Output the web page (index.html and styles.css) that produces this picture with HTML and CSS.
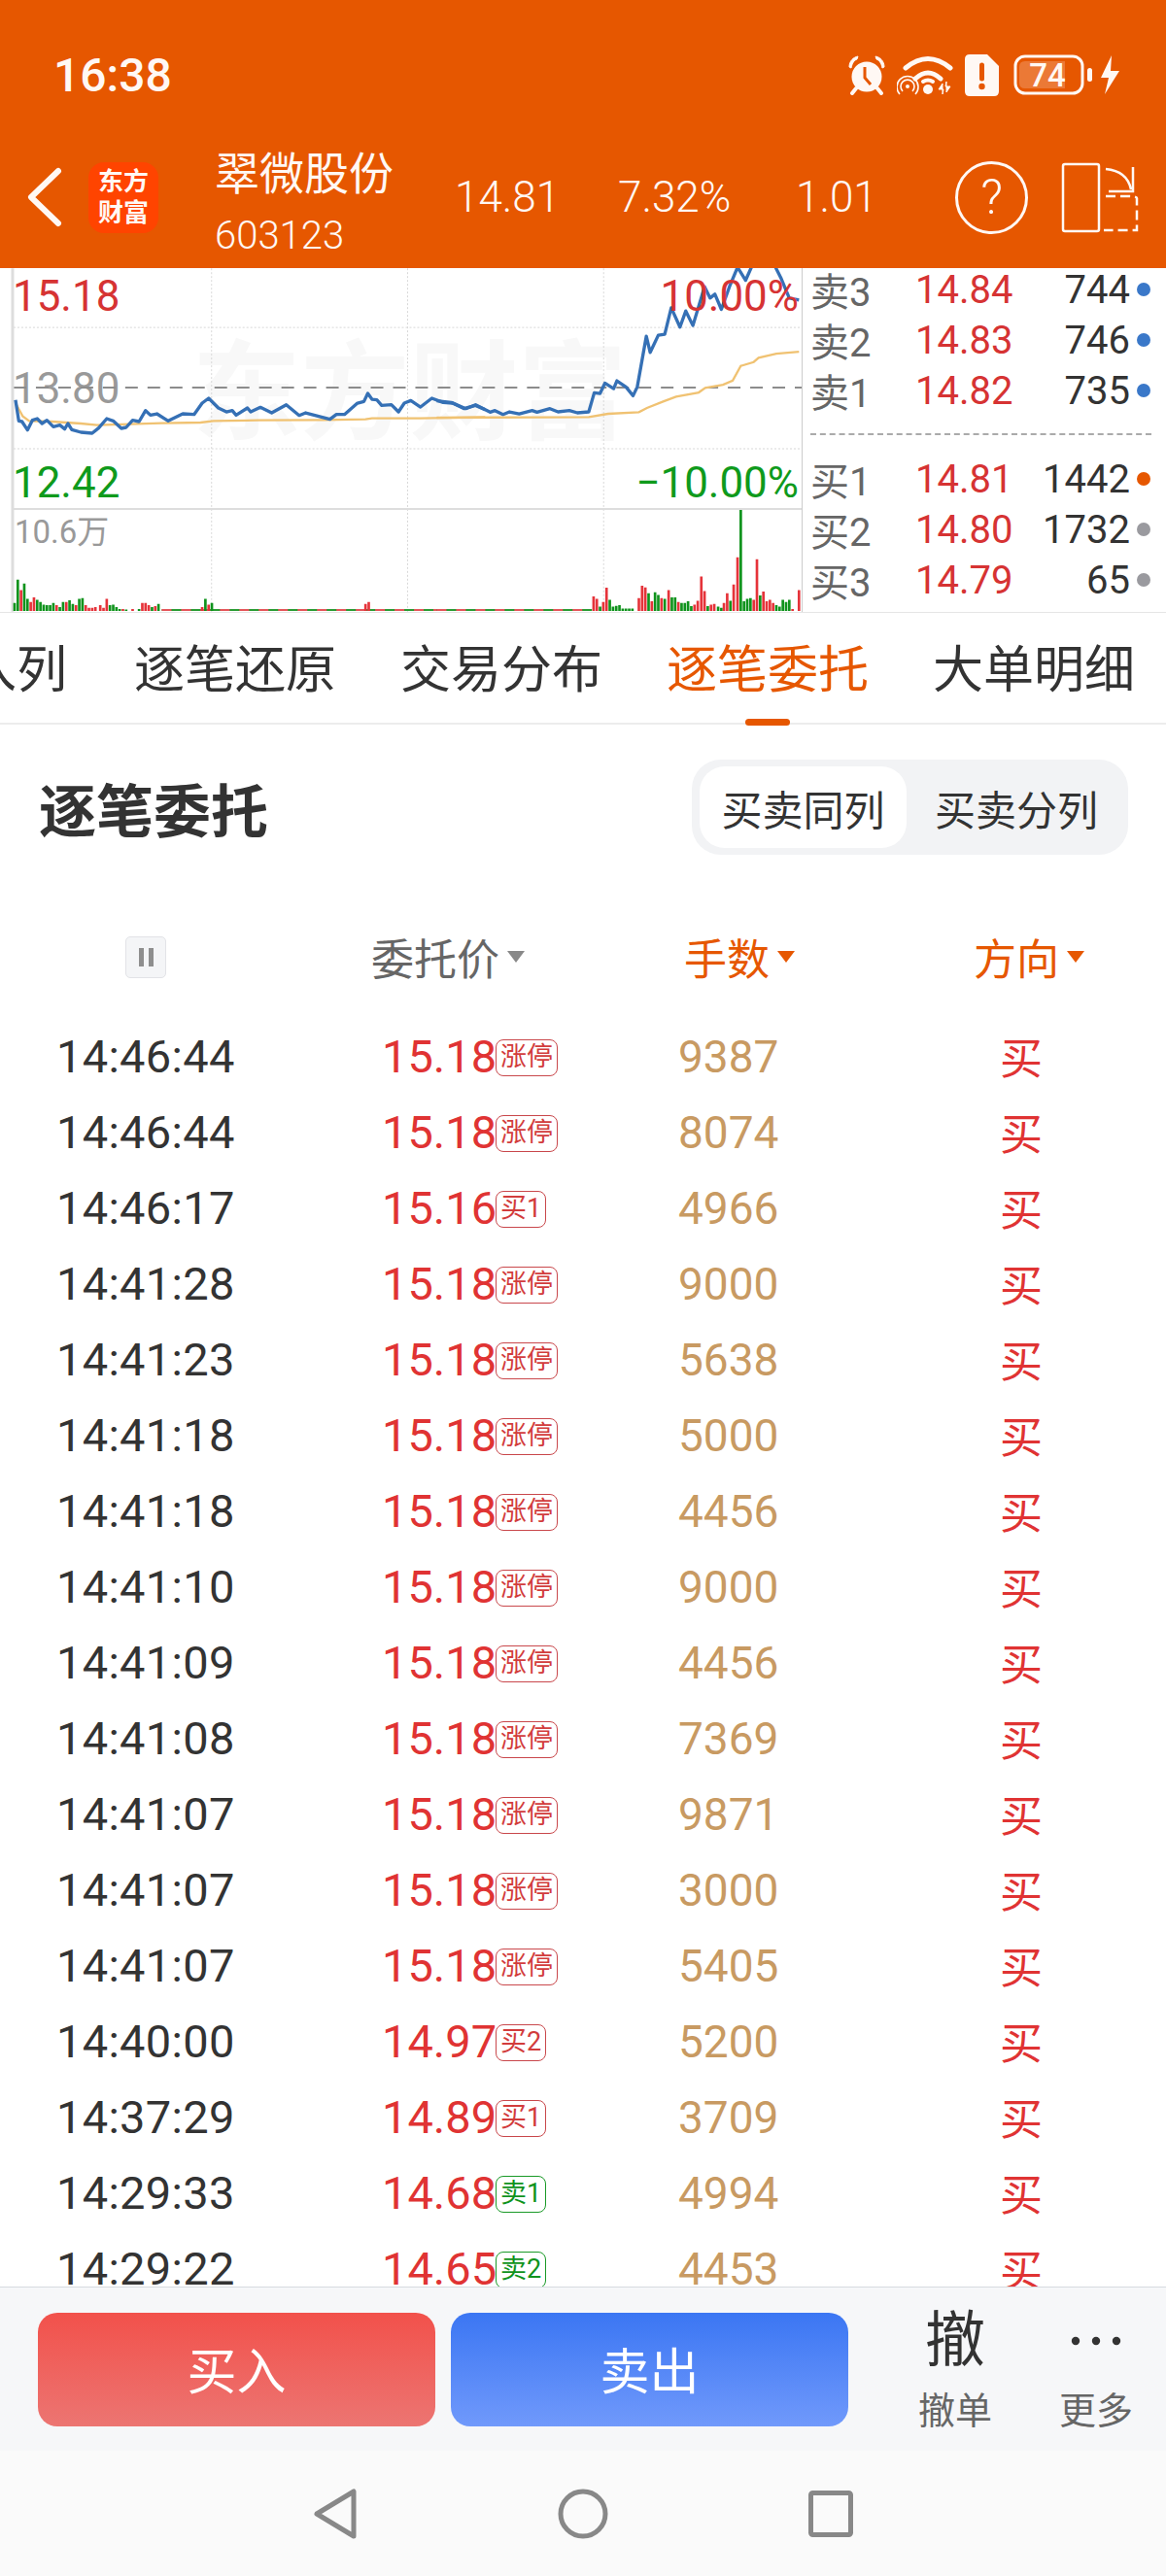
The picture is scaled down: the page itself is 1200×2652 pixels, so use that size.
FILE: index.html
```html
<!DOCTYPE html>
<html lang="zh-CN">
<head>
  <meta charset="UTF-8" />
  <meta name="viewport" content="width=device-width, initial-scale=1.0"/>
  <title>翠微股份 逐笔委托</title>
  <link rel="stylesheet" href="styles.css">
</head>
<body>
  <div class="page">
    <header class="header">
      <div class="status">
        <span class="clock">16:38</span>
        <div class="status-icons">
          <svg class="ic-alarm" width="40" height="41" viewBox="0 0 40 41">
            <circle cx="20" cy="22" r="15.5" fill="#fff8f4"/>
            <path d="M18 12v11l6 7" fill="none" stroke="#e65700" stroke-width="3"/>
            <path d="M2 12C2 6 6 2 11 1l-1 3C7 5 5 8 4 13zM38 12C38 6 34 2 29 1l1 3c3 1 5 4 6 9z" fill="#fff8f4" stroke="#fff8f4"/>
            <path d="M9 34l-4 5M31 34l4 5" stroke="#fff8f4" stroke-width="4" stroke-linecap="round"/>
          </svg>
          <svg class="ic-wifi" width="60" height="42" viewBox="0 0 60 42">
            <path d="M9 14Q32 -5 55 14M19 25Q32 13 45 25" fill="none" stroke="#fff8f4" stroke-width="5" stroke-linecap="round"/>
            <path d="M27 28Q32 25 37 28" fill="none" stroke="#fff8f4" stroke-width="4" stroke-linecap="round"/>
            <circle cx="32" cy="36" r="5" fill="#fff8f4"/>
            <circle cx="11" cy="33" r="2" fill="#fff8f4"/>
            <path d="M6 38a7 7 0 1 1 10 0M3 41a11 11 0 1 1 16 0" fill="none" stroke="#fff8f4" stroke-width="1.6"/>
            <path d="M47 41V30l-4 6h5zM51 28v11l4-6h-5z" fill="#fff8f4" stroke="#fff8f4"/>
          </svg>
          <svg class="ic-sim" width="35" height="43" viewBox="0 0 35 43">
            <path d="M5 0H23L35 12V38Q35 43 30 43H5Q0 43 0 38V5Q0 0 5 0Z" fill="#fff8f4"/>
            <path d="M17.500 11v14" stroke="#e65700" stroke-width="5" stroke-linecap="round"/>
            <circle cx="17.500" cy="33" r="3.200" fill="#e65700"/>
          </svg>
          <svg class="ic-battery" width="110" height="42" viewBox="0 0 110 42">
            <rect x="2" y="2" width="69" height="38" rx="10" fill="none" stroke="#fff8f4" stroke-width="3"/>
            <path d="M12 7H53V35H12Q6 35 6 29V13Q6 7 12 7Z" fill="#fff8f4" fill-opacity=".22"/>
            <text class="battery-num" x="35" y="33" text-anchor="middle">74</text>
            <rect x="76" y="14" width="5" height="14" rx="2.500" fill="#fff8f4"/>
            <path d="M101 1L90 24H98L94 41L109 17H100Z" fill="#fff8f4"/>
          </svg>
        </div>
      </div>
      <div class="topbar">
        <svg class="back" width="40" height="64" viewBox="0 0 40 64">
          <path d="M34 5L6 32L34 59" fill="none" stroke="#fff8f4" stroke-width="6" stroke-linecap="round" stroke-linejoin="round"/>
        </svg>
        <div class="logo"><span>东方</span><span>财富</span></div>
        <div class="stock">
          <div class="stock-name">翠微股份</div>
          <div class="stock-code">603123</div>
        </div>
        <span class="stat stat-price">14.81</span>
        <span class="stat stat-pct">7.32%</span>
        <span class="stat stat-diff">1.01</span>
        <div class="help">?</div>
        <svg class="rotate" width="80" height="74" viewBox="0 0 80 74" fill="none" stroke="#fff8f4" stroke-width="2.500">
          <rect x="2" y="3" width="37" height="69" rx="2"/>
          <path d="M46 36H68Q78 36 78 38V71H44" stroke-dasharray="10 5"/>
          <path d="M46 8Q68 10 72 29M74 6V31H49"/>
        </svg>
      </div>
    </header>

    <section class="quote">
      <svg class="chart" width="826" height="354" viewBox="0 276 826 354">
        <text class="mark" x="198" y="444">东方财富</text>
        <path class="grid-dot" d="M218 276V630M420 276V630M622 276V630M14 337H826M14 462H826"/>
        <text class="lbl lbl-flat" x="13" y="415">13.80</text>
        <path class="grid-mid" d="M14 399H826"/>
        <path class="grid-line" d="M14 524H826"/>
        <path class="grid-left" d="M13 276V630"/>

        <g transform="translate(0 270) scale(.3333)">
          <polyline class="avg" points="48,435 70,475 90,490 160,492 250,498 300,503 400,500 500,497 620,495 660,490 800,488 1000,487 1130,485 1150,482 1300,482 1500,478"/>
          <polyline class="price" points="48,425 58,490 68,492 85,518 100,488 115,483 130,498 145,488 165,508 185,503 200,515 210,498 222,517 250,525 285,528 305,512 330,483 350,490 375,513 390,510 410,488 430,492 450,458 465,472 485,468 520,490 565,468 600,470 625,435 645,420 675,450 700,462 718,458 730,472 765,450 775,462 805,448 840,465 885,440 925,473 945,465 1020,485 1040,470 1065,470 1105,435 1125,430 1137,405 1150,423 1165,425 1180,442 1210,440 1232,462 1250,435 1270,427 1300,447 1335,420 1370,433 1400,435 1435,452 1470,442 1500,455"/>
          <path class="flat-green" d="M500 1075H1500"/>
          <path class="flat-red" d="M500 1075H1500"/>
          <path class="bar-green" d="M45 1078v-25M55 1078v-97M75 1078v-85M85 1078v-38M115 1078v-35M125 1078v-28M135 1078v-20M145 1078v-18M155 1078v-18M165 1078v-25M185 1078v-12M195 1078v-28M215 1078v-33M225 1078v-22M245 1078v-38M255 1078v-40M340 1078v-18M350 1078v-20M360 1078v-12M370 1078v-6M390 1078v-5M430 1078v-6M470 1078v-12M490 1078v-22M635 1078v-38M655 1078v-25"/>
          <path class="bar-red" d="M65 1078v-65M95 1078v-28M105 1078v-42M175 1078v-18M205 1078v-28M235 1078v-18M265 1078v-18M275 1078v-10M285 1078v-10M295 1078v-12M310 1078v-18M320 1078v-10M330 1078v-38M380 1078v-6M410 1078v-6M440 1078v-25M450 1078v-25M460 1078v-18M480 1078v-15M625 1078v-12M645 1078v-20M1130 1078v-22M1140 1078v-28"/>
        </g>
        <g transform="translate(450 270) scale(.3333)">
          <polyline class="avg" points="0,480 470,478 530,468 625,463 650,450 700,430 740,415 810,402 830,388 885,378 915,365 940,320 980,308 995,295 1050,282 1120,276"/>
          <polyline class="price" points="0,428 45,433 90,452 120,440 165,463 180,458 205,470 225,462 255,468 295,458 310,463 350,452 375,462 410,458 435,465 470,462 487,403 505,405 520,373 547,390 557,366 585,385 607,412 620,385 648,228 660,278 685,225 705,222 725,140 752,200 770,150 792,195 828,75 845,110 860,98 880,145 905,75 930,15 955,55 975,10 1045,10 1065,50 1090,110 1120,116"/>
          <path class="flat-green" d="M0 1075H480"/>
          <path class="flat-red" d="M0 1075H480"/>
          <path class="bar-green" d="M505 1078v-14M535 1078v-35M545 1078v-14M555 1078v-16M565 1078v-18M575 1078v-8M585 1078v-8M595 1078v-8M605 1078v-8M655 1078v-55M675 1078v-58M685 1078v-50M705 1078v-38M727 1078v-42M737 1078v-42M757 1078v-25M767 1078v-25M777 1078v-30M787 1078v-15M838 1078v-15M870 1078v-14M880 1078v-10M908 1078v-32M940 1078v-313M950 1078v-30M960 1078v-38M970 1078v-40M1000 1078v-48M1050 1078v-18M1060 1078v-14M1070 1078v-35M1080 1078v-28M1090 1078v-35"/>
          <path class="bar-red" d="M485 1078v-45M495 1078v-38M515 1078v-28M525 1078v-72M625 1078v-40M635 1078v-78M645 1078v-73M665 1078v-30M695 1078v-40M717 1078v-65M747 1078v-28M797 1078v-20M807 1078v-32M818 1078v-107M828 1078v-62M848 1078v-20M858 1078v-22M888 1078v-25M898 1078v-55M918 1078v-82M930 1078v-166M980 1078v-35M990 1078v-160M1010 1078v-60M1020 1078v-30M1030 1078v-35M1040 1078v-25M1100 1078v-6M1120 1078v-65"/>
        </g>

        <text class="lbl lbl-up" x="13" y="320">15.18</text>
        <text class="lbl lbl-up" x="823" y="320" text-anchor="end">10.00%</text>
        <text class="lbl lbl-down" x="13" y="512">12.42</text>
        <text class="lbl lbl-down" x="823" y="512" text-anchor="end">−10.00%</text>
        <text class="lbl-vol" x="15" y="559">10.6万</text>
      </svg>

      <div class="book">
        <div class="book-row"><span class="book-label">卖3</span><span class="book-price">14.84</span><span class="book-qty">744</span><i class="dot dot-blue"></i></div>
        <div class="book-row"><span class="book-label">卖2</span><span class="book-price">14.83</span><span class="book-qty">746</span><i class="dot dot-blue"></i></div>
        <div class="book-row"><span class="book-label">卖1</span><span class="book-price">14.82</span><span class="book-qty">735</span><i class="dot dot-blue"></i></div>
        <div class="book-split"></div>
        <div class="book-row"><span class="book-label">买1</span><span class="book-price">14.81</span><span class="book-qty">1442</span><i class="dot dot-orange"></i></div>
        <div class="book-row"><span class="book-label">买2</span><span class="book-price">14.80</span><span class="book-qty">1732</span><i class="dot dot-gray"></i></div>
        <div class="book-row"><span class="book-label">买3</span><span class="book-price">14.79</span><span class="book-qty">65</span><i class="dot dot-gray"></i></div>
      </div>
    </section>

    <nav class="tabs">
      <span class="tab tab-cut">入列</span>
      <span class="tab">逐笔还原</span>
      <span class="tab">交易分布</span>
      <span class="tab active">逐笔委托</span>
      <span class="tab">大单明细</span>
    </nav>

    <div class="title-row">
      <h2 class="title">逐笔委托</h2>
      <div class="toggle">
        <span class="toggle-btn active">买卖同列</span>
        <span class="toggle-btn">买卖分列</span>
      </div>
    </div>

    <div class="table-head">
      <div class="pause"><i></i><i></i></div>
      <div class="head-cell">委托价<i class="tri"></i></div>
      <div class="head-cell on">手数<i class="tri"></i></div>
      <div class="head-cell on">方向<i class="tri"></i></div>
    </div>

    <div class="rows">
      <div class="row"><span class="time">14:46:44</span><span class="cell-price">15.18<em class="tag">涨停</em></span><span class="qty">9387</span><span class="dir">买</span></div>
      <div class="row"><span class="time">14:46:44</span><span class="cell-price">15.18<em class="tag">涨停</em></span><span class="qty">8074</span><span class="dir">买</span></div>
      <div class="row"><span class="time">14:46:17</span><span class="cell-price">15.16<em class="tag">买1</em></span><span class="qty">4966</span><span class="dir">买</span></div>
      <div class="row"><span class="time">14:41:28</span><span class="cell-price">15.18<em class="tag">涨停</em></span><span class="qty">9000</span><span class="dir">买</span></div>
      <div class="row"><span class="time">14:41:23</span><span class="cell-price">15.18<em class="tag">涨停</em></span><span class="qty">5638</span><span class="dir">买</span></div>
      <div class="row"><span class="time">14:41:18</span><span class="cell-price">15.18<em class="tag">涨停</em></span><span class="qty">5000</span><span class="dir">买</span></div>
      <div class="row"><span class="time">14:41:18</span><span class="cell-price">15.18<em class="tag">涨停</em></span><span class="qty">4456</span><span class="dir">买</span></div>
      <div class="row"><span class="time">14:41:10</span><span class="cell-price">15.18<em class="tag">涨停</em></span><span class="qty">9000</span><span class="dir">买</span></div>
      <div class="row"><span class="time">14:41:09</span><span class="cell-price">15.18<em class="tag">涨停</em></span><span class="qty">4456</span><span class="dir">买</span></div>
      <div class="row"><span class="time">14:41:08</span><span class="cell-price">15.18<em class="tag">涨停</em></span><span class="qty">7369</span><span class="dir">买</span></div>
      <div class="row"><span class="time">14:41:07</span><span class="cell-price">15.18<em class="tag">涨停</em></span><span class="qty">9871</span><span class="dir">买</span></div>
      <div class="row"><span class="time">14:41:07</span><span class="cell-price">15.18<em class="tag">涨停</em></span><span class="qty">3000</span><span class="dir">买</span></div>
      <div class="row"><span class="time">14:41:07</span><span class="cell-price">15.18<em class="tag">涨停</em></span><span class="qty">5405</span><span class="dir">买</span></div>
      <div class="row"><span class="time">14:40:00</span><span class="cell-price">14.97<em class="tag">买2</em></span><span class="qty">5200</span><span class="dir">买</span></div>
      <div class="row"><span class="time">14:37:29</span><span class="cell-price">14.89<em class="tag">买1</em></span><span class="qty">3709</span><span class="dir">买</span></div>
      <div class="row"><span class="time">14:29:33</span><span class="cell-price">14.68<em class="tag tag-sell">卖1</em></span><span class="qty">4994</span><span class="dir">买</span></div>
      <div class="row"><span class="time">14:29:22</span><span class="cell-price">14.65<em class="tag tag-sell">卖2</em></span><span class="qty">4453</span><span class="dir">买</span></div>
    </div>

    <div class="actions">
      <div class="trade-btn buy">买入</div>
      <div class="trade-btn sell">卖出</div>
      <div class="action action-cancel">
        <span class="action-icon">撤</span>
        <span class="action-label">撤单</span>
      </div>
      <div class="action action-more">
        <span class="action-icon">
          <svg width="54" height="10" viewBox="0 0 54 10" fill="#333">
            <circle cx="6" cy="5" r="4.200"/><circle cx="27" cy="5" r="4.200"/><circle cx="48" cy="5" r="4.200"/>
          </svg>
        </span>
        <span class="action-label">更多</span>
      </div>
    </div>

    <div class="navbar">
      <svg width="60" height="60" viewBox="0 0 60 60" class="nav-ic"><polygon points="11,30 49,7 49,53"/></svg>
      <svg width="60" height="60" viewBox="0 0 60 60" class="nav-ic"><circle cx="30" cy="30" r="23"/></svg>
      <svg width="60" height="60" viewBox="0 0 60 60" class="nav-ic"><rect x="9.500" y="8.500" width="41" height="43" rx="2"/></svg>
    </div>
  </div>
</body>
</html>
```

FILE: styles.css
```css
* {
  margin: 0;
  padding: 0;
  box-sizing: border-box;
}

body {
  font-family: Roboto, 'Noto Sans CJK SC', sans-serif;
  background: #fff;
  color: #333;
}

.page {
  width: 1200px;
  height: 2652px;
  display: flex;
  flex-direction: column;
  overflow: hidden;
}

/* top bar */
.header {
  height: 276px;
  flex: none;
  background: #e65700;
  color: #fff8f4;
}

.status {
  height: 142px;
  padding: 12px 47px 0 55px;
  display: flex;
  align-items: center;
  justify-content: space-between;
}

.clock {
  font-size: 48px;
  font-weight: 500;
}

.status-icons {
  display: flex;
  align-items: center;
}

.ic-alarm { margin-right: 11px; }
.ic-wifi { margin-right: 10px; }
.ic-sim { margin-right: 15px; }

.battery-num {
  font-size: 33px;
  font-weight: 500;
  fill: #fff8f4;
}

.topbar {
  height: 122px;
  padding-left: 26px;
  display: flex;
  align-items: center;
}

.back { flex: none; }

.logo {
  width: 72px;
  height: 73px;
  margin-left: 25px;
  flex: none;
  border-radius: 16px;
  background: #ff4400;
  display: flex;
  flex-direction: column;
  align-items: center;
  justify-content: center;
  font-size: 26px;
  font-weight: 700;
  line-height: 32px;
}

.stock {
  width: 247px;
  margin-left: 58px;
  flex: none;
  padding-top: 11px;
}

.stock-name {
  font-size: 46px;
  line-height: 56px;
}

.stock-code {
  margin-top: 13px;
  font-size: 40px;
  line-height: 46px;
  font-weight: 300;
}

.stat {
  font-size: 44px;
  flex: none;
  font-weight: 300;
}

.stat-price { width: 168px; }
.stat-pct { width: 183px; }
.stat-diff { width: 164px; }

.help {
  width: 75px;
  height: 75px;
  flex: none;
  border: 3px solid #fff8f4;
  border-radius: 50%;
  display: flex;
  align-items: center;
  justify-content: center;
  font-size: 50px;
  font-weight: 300;
}

.rotate {
  margin-left: 34px;
  flex: none;
}

/* chart + order book */
.quote {
  height: 355px;
  flex: none;
  display: flex;
  border-bottom: 1px solid #e6e6e6;
}

.chart {
  flex: none;
  display: block;
  border-right: 1px solid #ccc;
}

.mark {
  font-size: 112px;
  font-weight: 700;
  fill: #f8f8f8;
}

.grid-dot {
  fill: none;
  stroke: #d8d8d8;
  stroke-dasharray: 2 2;
}

.grid-mid {
  stroke: #8c8c8c;
  stroke-width: 2;
  stroke-dasharray: 13 10;
}

.grid-line {
  stroke: #ddd;
  stroke-width: 2;
}

.grid-left {
  stroke: #ddd;
  stroke-width: 3;
}

.lbl { font-size: 44px; }
.lbl-up { fill: #d63333; }
.lbl-down { fill: #0f9a1c; }
.lbl-flat { fill: #999; }

.lbl-vol {
  font-size: 33px;
  fill: #999;
}

.price {
  fill: none;
  stroke: #3570b5;
  stroke-width: 10;
  stroke-linejoin: round;
}

.avg {
  fill: none;
  stroke: #f0c272;
  stroke-width: 7;
}

.bar-red, .bar-green, .flat-red, .flat-green {
  fill: none;
  stroke-width: 8;
}

.bar-red { stroke: #e5333a; }
.bar-green { stroke: #0f931c; }

.flat-red {
  stroke: #e5555a;
  stroke-width: 6;
  stroke-dasharray: 30 30;
}

.flat-green {
  stroke: #2a9c34;
  stroke-width: 6;
}

.book {
  flex: 1;
  padding: 0 15px 0 8px;
  display: flex;
  flex-direction: column;
  gap: 8px;
}

.book-row {
  height: 44px;
  display: flex;
  align-items: center;
  font-size: 40px;
}

.book-label {
  width: 108px;
  color: #666;
}

.book-price {
  width: 122px;
  color: #d63333;
}

.book-qty {
  width: 99px;
  text-align: right;
}

.dot {
  width: 14px;
  height: 14px;
  margin-left: 7px;
  border-radius: 50%;
}

.dot-blue { background: #3a78c9; }
.dot-orange { background: #e65700; }
.dot-gray { background: #9a9a9f; }

.book-split {
  height: 16px;
  margin-bottom: 15px;
  border-bottom: 2px dashed #aaa;
}

/* tabs */
.tabs {
  height: 115px;
  flex: none;
  position: relative;
  padding-bottom: 5px;
  display: flex;
  align-items: center;
  gap: 66px;
  border-bottom: 2px solid #ececec;
  font-size: 52px;
}

.tabs::before {
  content: '';
  position: absolute;
  left: 0;
  top: 0;
  width: 75px;
  height: 100px;
  background: linear-gradient(90deg, #fff 15%, rgba(255, 255, 255, 0.45));
}

.tab {
  flex: none;
  position: relative;
  color: #333;
}

.tab-cut {
  margin-left: -35px;
  margin-right: 3px;
}

.tab.active { color: #e65700; }

.tab.active::after {
  content: '';
  position: absolute;
  left: 81px;
  bottom: -24px;
  width: 46px;
  height: 7px;
  border-radius: 4px;
  background: #e65700;
}

.title-row {
  flex: none;
  margin-top: 36px;
  padding: 0 39px 0 40px;
  display: flex;
  align-items: center;
  justify-content: space-between;
}

.title {
  font-size: 59px;
  font-weight: 700;
  color: #333;
}

.toggle {
  width: 449px;
  height: 98px;
  padding: 7px 8px;
  border-radius: 30px;
  background: #f2f3f5;
  display: flex;
}

.toggle-btn {
  flex: 1;
  padding-left: 6px;
  border-radius: 26px;
  display: flex;
  align-items: center;
  justify-content: center;
  font-size: 42px;
}

.toggle-btn.active {
  flex: none;
  width: 213px;
  padding-left: 0;
  background: #fff;
}

/* table */
.table-head {
  height: 78px;
  margin-top: 66px;
  flex: none;
  padding-left: 129px;
  display: grid;
  grid-template-columns: 253px 322px 298px 1fr;
  align-items: center;
  font-size: 44px;
  color: #666;
}

.pause {
  width: 42px;
  height: 43px;
  border: 1px solid #e2e3e7;
  border-radius: 5px;
  background: #f4f5f7;
  display: flex;
  align-items: center;
  justify-content: center;
  gap: 5px;
}

.pause i {
  width: 5px;
  height: 19px;
  background: #8e8e8e;
}

.head-cell {
  display: flex;
  align-items: center;
}

.tri {
  width: 0;
  height: 0;
  margin-left: 8px;
  border-left: 9px solid transparent;
  border-right: 9px solid transparent;
  border-top: 12px solid #888;
}

.head-cell.on { color: #e65700; }
.head-cell.on .tri { border-top-color: #e65700; }

.rows {
  flex: 1;
  min-height: 0;
  margin-top: 24px;
  overflow: hidden;
}

.row {
  height: 78px;
  padding-left: 58px;
  display: grid;
  grid-template-columns: 335px 305px 331px 1fr;
  align-items: center;
  font-size: 47px;
}

.time {
  color: #333;
  letter-spacing: 0.3px;
}

.cell-price {
  display: flex;
  align-items: center;
  color: #e03333;
}

.tag {
  height: 38px;
  margin: 4px 0 0 -1px;
  padding: 0 4px;
  border: 1px solid #c9484c;
  border-radius: 8px;
  font-size: 27px;
  font-style: normal;
  line-height: 35px;
  color: #d23c3c;
}

.tag-sell {
  border-color: #1a9a28;
  color: #0f931c;
}

.qty {
  padding-top: 2px;
  font-size: 46px;
  color: #c89a62;
}

.dir {
  font-size: 44px;
  color: #e03333;
}

/* bottom */
.actions {
  height: 169px;
  flex: none;
  padding: 26px 0 0 39px;
  display: flex;
  align-items: flex-start;
  border-top: 1px solid #d7dae0;
  background: #f6f7f9;
}

.trade-btn {
  width: 409px;
  height: 117px;
  padding-bottom: 4px;
  border-radius: 20px;
  display: flex;
  align-items: center;
  justify-content: center;
  color: #fff;
  font-size: 51px;
}

.buy { background: linear-gradient(#f2514b, #ec7572); }

.sell {
  margin-left: 16px;
  background: linear-gradient(#3b76f3, #7099fb);
}

.action {
  width: 100px;
  display: flex;
  flex-direction: column;
  align-items: center;
}

.action-cancel { margin-left: 60px; }
.action-more { margin-left: 45px; }

.action-icon {
  height: 58px;
  margin-bottom: 20px;
  display: flex;
  align-items: center;
  font-size: 62px;
  line-height: 58px;
}

.action-label {
  font-size: 38px;
  line-height: 46px;
  color: #666;
}

.navbar {
  height: 129px;
  flex: none;
  background: #fafafa;
  display: flex;
  align-items: center;
  justify-content: center;
  gap: 195px;
}

.nav-ic {
  fill: none;
  stroke: #888;
  stroke-width: 5;
  stroke-linejoin: round;
}
```
